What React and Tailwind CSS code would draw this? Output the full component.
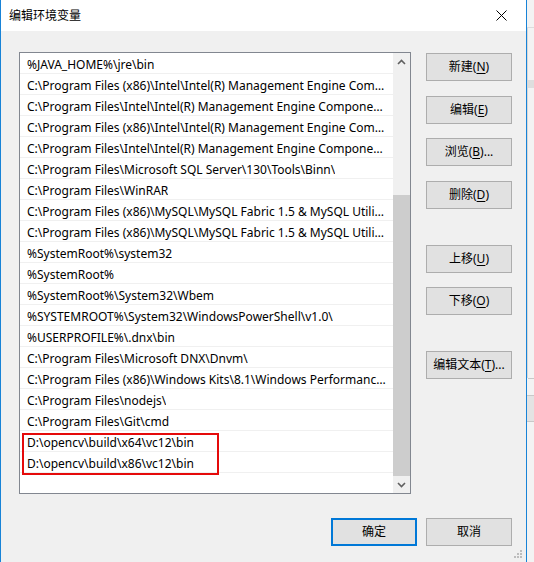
import React from 'react';

const paths = [
  '%JAVA_HOME%\\jre\\bin',
  'C:\\Program Files (x86)\\Intel\\Intel(R) Management Engine Components\\DAL',
  'C:\\Program Files\\Intel\\Intel(R) Management Engine Components\\DAL',
  'C:\\Program Files (x86)\\Intel\\Intel(R) Management Engine Components\\IPT',
  'C:\\Program Files\\Intel\\Intel(R) Management Engine Components\\IPT',
  'C:\\Program Files\\Microsoft SQL Server\\130\\Tools\\Binn\\',
  'C:\\Program Files\\WinRAR',
  'C:\\Program Files (x86)\\MySQL\\MySQL Fabric 1.5 & MySQL Utilities 1.5\\',
  'C:\\Program Files (x86)\\MySQL\\MySQL Fabric 1.5 & MySQL Utilities 1.5\\Doctrine extensions for PHP\\',
  '%SystemRoot%\\system32',
  '%SystemRoot%',
  '%SystemRoot%\\System32\\Wbem',
  '%SYSTEMROOT%\\System32\\WindowsPowerShell\\v1.0\\',
  '%USERPROFILE%\\.dnx\\bin',
  'C:\\Program Files\\Microsoft DNX\\Dnvm\\',
  'C:\\Program Files (x86)\\Windows Kits\\8.1\\Windows Performance Toolkit\\',
  'C:\\Program Files\\nodejs\\',
  'C:\\Program Files\\Git\\cmd',
  'D:\\opencv\\build\\x64\\vc12\\bin',
  'D:\\opencv\\build\\x86\\vc12\\bin',
];

// side buttons: label, mnemonic, suffix, top margin
const sideButtons = [
  { pre: '新建(', key: 'N', post: ')', mt: 'mt-[1px]' },
  { pre: '编辑(', key: 'E', post: ')', mt: 'mt-[15px]' },
  { pre: '浏览(', key: 'B', post: ')...', mt: 'mt-[14px]' },
  { pre: '删除(', key: 'D', post: ')', mt: 'mt-[15px]' },
  { pre: '上移(', key: 'U', post: ')', mt: 'mt-[36px]' },
  { pre: '下移(', key: 'O', post: ')', mt: 'mt-[14px]' },
  { pre: '编辑文本(', key: 'T', post: ')...', mt: 'mt-[36px]' },
];

const Chevron = ({ up }) => (
  <svg width="9" height="6" viewBox="0 0 9 6">
    <path
      d={up ? 'M1 5 L4.5 1.5 L8 5' : 'M1 1 L4.5 4.5 L8 1'}
      fill="none"
      stroke="#606060"
      strokeWidth="1.6"
    />
  </svg>
);

const SideButton = ({ pre, k, post, className = '' }) => (
  <button
    className={`h-[28px] w-[86px] border border-[#adadad] bg-[#e1e1e1] text-[12px] text-black flex items-center justify-center ${className}`}
  >
    {pre}
    <span className="underline underline-offset-2">{k}</span>
    {post}
  </button>
);

export default function App() {
  return (
    <div
      className="w-[534px] h-[562px] flex bg-[#f0f0f0] overflow-hidden"
      style={{ fontFamily: '"Noto Sans", "Noto Sans CJK SC", sans-serif' }}
    >
      {/* dialog window */}
      <div className="w-[527px] h-full flex flex-col border-l border-r border-[#1883d7]">
        <div className="h-[31px] bg-white flex items-center justify-between pl-[8px] pr-[19px] shrink-0">
          <span className="text-[12px] text-black">编辑环境变量</span>
          <svg width="11" height="11" viewBox="0 0 11 11">
            <path d="M0.5 0.5 L10.5 10.5 M10.5 0.5 L0.5 10.5" stroke="#000" strokeWidth="1" />
          </svg>
        </div>

        <div className="flex-1 flex flex-col bg-[#f0f0f0] pl-[18px] pt-[21px] relative">
          <div className="flex">
            {/* path list */}
            <div className="relative w-[392px] h-[442px] border border-[#828790] bg-white flex">
              <div className="w-[373px] flex flex-col">
                {paths.map((p, i) => (
                  <div
                    key={i}
                    className="h-[21px] shrink-0 border-b border-[#f0f0f0] pl-[7px] pr-[5px] pt-[2px] flex items-center text-[12px] text-black"
                  >
                    <span className="truncate whitespace-nowrap leading-[17px]">{p}</span>
                  </div>
                ))}
              </div>
              <div className="w-[17px] flex flex-col bg-[#f0f0f0]">
                <div className="h-[17px] flex items-center justify-center">
                  <Chevron up />
                </div>
                <div className="flex-1 flex flex-col justify-end">
                  <div className="h-[281px] bg-[#cdcdcd]" />
                </div>
                <div className="h-[17px] flex items-center justify-center">
                  <Chevron />
                </div>
              </div>
              {/* highlight around the opencv entries */}
              <div className="absolute left-[2px] top-[380px] w-[197px] h-[42px] border-2 border-[#e50a0a]" />
            </div>

            <div className="ml-[15px] flex flex-col">
              {sideButtons.map((b, i) => (
                <SideButton key={i} pre={b.pre} k={b.key} post={b.post} className={b.mt} />
              ))}
            </div>
          </div>

          <div className="flex mt-[24px] pl-[312px] gap-[9px]">
            <button className="h-[28px] w-[86px] border-2 border-[#0078d7] bg-[#e1e1e1] text-[12px] text-black">
              确定
            </button>
            <button className="h-[28px] w-[86px] border border-[#adadad] bg-[#e1e1e1] text-[12px] text-black">
              取消
            </button>
          </div>

          {/* size grip */}
          <svg className="absolute right-[3px] bottom-[3px]" width="9" height="9" viewBox="0 0 9 9">
            <g fill="#bdbdbd">
              <rect x="6" y="0" width="2" height="2" />
              <rect x="3" y="3" width="2" height="2" />
              <rect x="6" y="3" width="2" height="2" />
              <rect x="0" y="6" width="2" height="2" />
              <rect x="3" y="6" width="2" height="2" />
              <rect x="6" y="6" width="2" height="2" />
            </g>
          </svg>
        </div>
      </div>

      {/* window behind the dialog */}
      <div className="flex-1 flex flex-col bg-[#f3f3f3]">
        <div className="h-[28px] border-b border-[#dcdcdc]" />
        <div className="h-[350px] border-l border-[#d8d8d8] flex flex-col">
          <div className="mt-[52px] h-[40px] bg-[#dedede]" />
          <div className="mt-[290px] h-px bg-[#c8c8c8]" />
        </div>
        <div className="h-[18px] border-b border-[#c8c8c8]" />
        <div className="h-[26px] bg-[#e3e3e3] border-b border-[#c8c8c8]" />
        <div className="flex-1" />
      </div>
    </div>
  );
}
